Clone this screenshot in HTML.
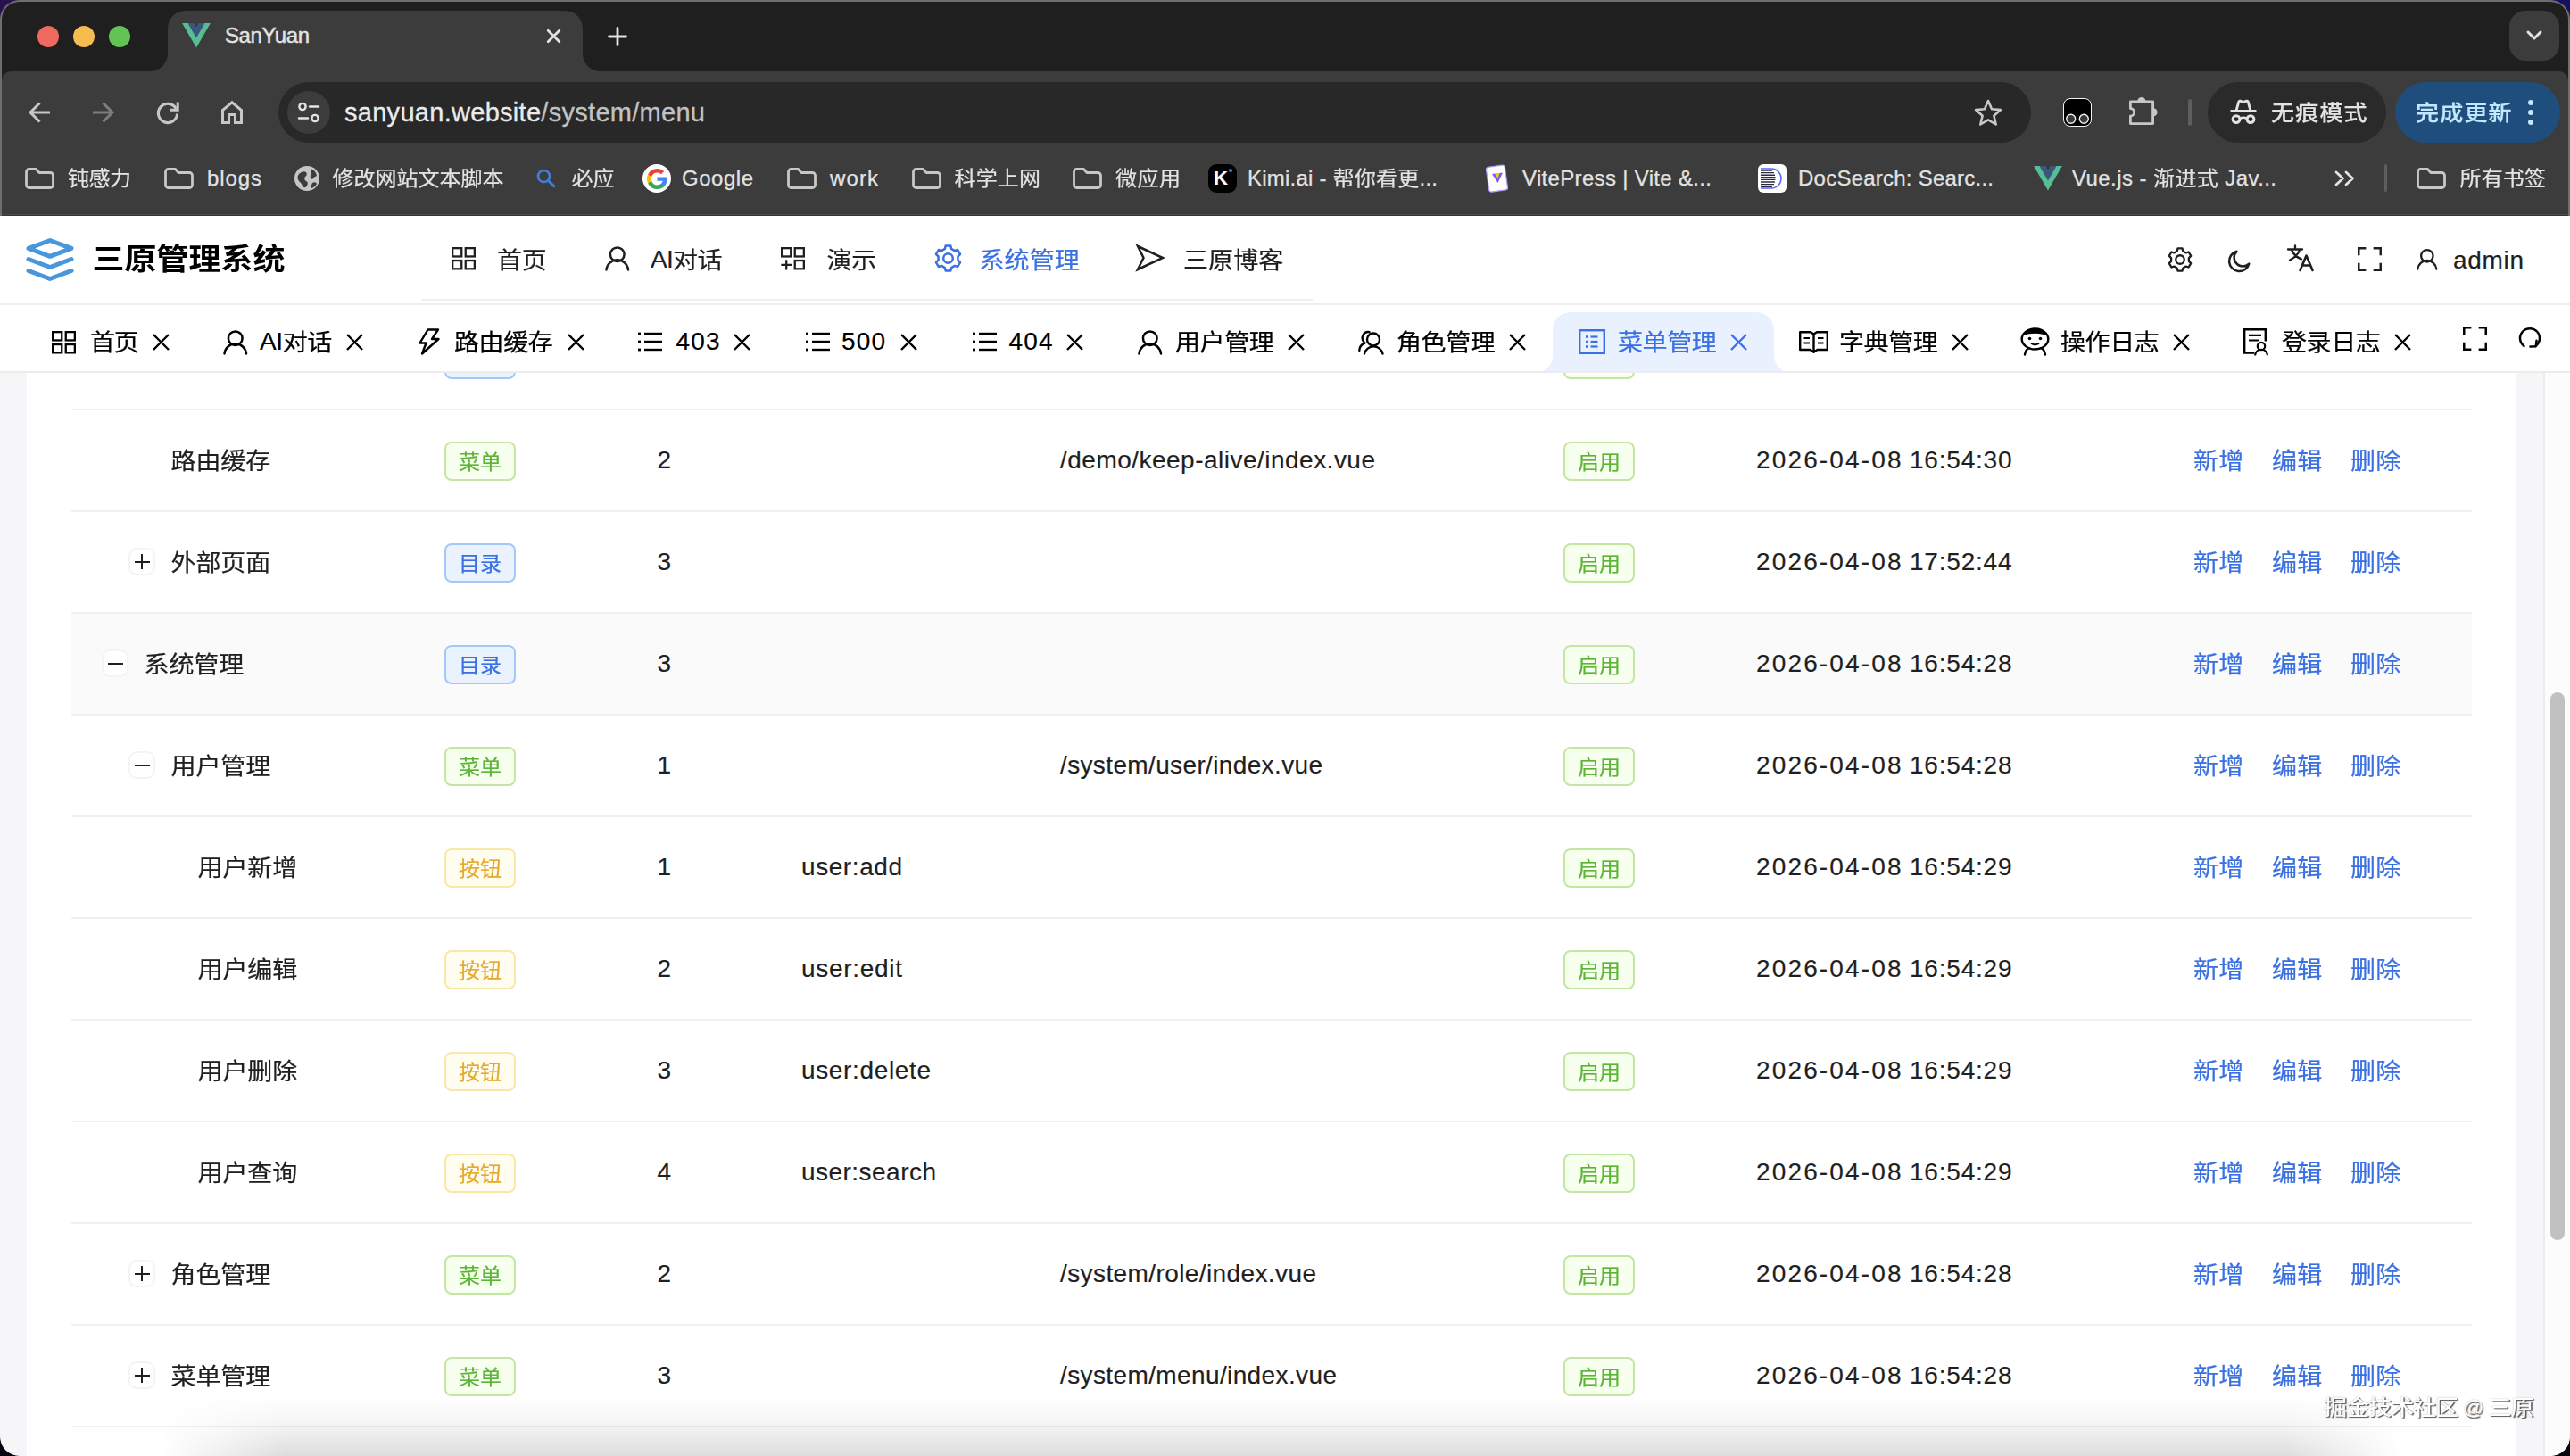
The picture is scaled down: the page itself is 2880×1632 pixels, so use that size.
<!DOCTYPE html>
<html lang="zh-CN"><head><meta charset="utf-8"><title>SanYuan</title>
<style>
html,body{margin:0;padding:0}
body{width:2880px;height:1632px;position:relative;overflow:hidden;background:#000;font-family:"Liberation Sans","Noto Sans CJK SC",sans-serif;-webkit-text-stroke:.18px}
div,svg{box-sizing:border-box}
svg{overflow:visible}
i{font-style:normal;display:inline-block;position:relative;top:.042em;transform:scaleY(.93);transform-origin:50% 55%;-webkit-text-stroke:.25px}
.nb i{-webkit-text-stroke:0}
.bk i{top:-.02em}
</style></head><body>
<div style="position:absolute;left:0px;top:0px;width:40px;height:40px;background:#2a1050;"></div>
<div style="position:absolute;left:2840px;top:0px;width:40px;height:40px;background:#161060;"></div>
<div style="position:absolute;left:0;top:0;width:2880px;height:1632px;border-radius:22px;background:#6e6e6e;overflow:hidden">
<div style="position:absolute;left:2px;top:2px;right:2px;bottom:0;border-radius:20px 20px 20px 20px;background:#1f1f1f;overflow:hidden" id="win">
</div></div>
<div style="position:absolute;left:0;top:0;width:2880px;height:1632px;border-radius:22px;overflow:hidden">
<svg style="position:absolute;left:160px;top:12px" width="520" height="68" viewBox="0 0 520 68"><path d="M0 68 H8 A20 20 0 0 0 28 48 V20 A20 20 0 0 1 48 0 H473 A20 20 0 0 1 493 20 V48 A20 20 0 0 0 513 68 H520 Z" fill="#3c3c3c"/></svg>
<div style="position:absolute;left:41.75px;top:28.75px;width:24.5px;height:24.5px;background:#ee6a5f;border-radius:50%"></div>
<div style="position:absolute;left:81.75px;top:28.75px;width:24.5px;height:24.5px;background:#f5bd4f;border-radius:50%"></div>
<div style="position:absolute;left:121.75px;top:28.75px;width:24.5px;height:24.5px;background:#61c455;border-radius:50%"></div>
<svg style="position:absolute;left:204px;top:26px;" width="32" height="27.5" viewBox="0 0 100 86.6" fill="none"><path d="M0 0 H39.4 L50 18.3 L60.6 0 H100 L50 86.6 Z" fill="#55bf93"/><path d="M20 0 H39.4 L50 18.3 L60.6 0 H80 L50 52 Z" fill="#3b5580"/></svg>
<div style="position:absolute;left:252px;top:16px;height:48px;line-height:48px;font-size:24px;color:#e3e3e3;white-space:nowrap;letter-spacing:-0.406px;-webkit-text-stroke:0.45px #e3e3e3;">SanYuan</div>
<svg style="position:absolute;left:612.5px;top:33px;" width="15" height="15" viewBox="0 0 15 15" fill="none"><path d="M1.2 1.2 L13.8 13.8 M13.8 1.2 L1.2 13.8" stroke="#e3e3e3" stroke-width="2.8" stroke-linecap="round"/></svg>
<svg style="position:absolute;left:682px;top:31px;" width="20" height="20" viewBox="0 0 20 20" fill="none"><path d="M10 0.5 V19.5 M0.5 10 H19.5" stroke="#e3e3e3" stroke-width="2.8" stroke-linecap="round"/></svg>
<div style="position:absolute;left:2812px;top:12px;width:56px;height:56px;background:#3c3c3c;border-radius:18px"></div>
<svg style="position:absolute;left:2831px;top:34px;" width="18" height="12" viewBox="0 0 18 12" fill="none"><path d="M2 2 L9 9 L16 2" stroke="#e3e3e3" stroke-width="3" stroke-linecap="round" stroke-linejoin="round"/></svg>
<div style="position:absolute;left:2px;top:80px;width:2876px;height:162px;background:#3c3c3c;border-radius:10px 10px 0 0"></div>
<div style="position:absolute;left:2px;top:240px;width:2876px;height:1px;background:#4a4a4a;"></div>
<div style="position:absolute;left:2px;top:241px;width:2876px;height:1px;background:#363636;"></div>
<svg style="position:absolute;left:32px;top:114px;" width="24" height="24" viewBox="0 0 24 24" fill="none"><path d="M12.5 1.5 L2 12 L12.5 22.5 M2.5 12 H24" stroke="#c7c7c7" stroke-width="3" stroke-linecap="butt" stroke-linejoin="miter"/></svg>
<svg style="position:absolute;left:104px;top:114px;" width="24" height="24" viewBox="0 0 24 24" fill="none"><path d="M11.5 1.5 L22 12 L11.5 22.5 M21.5 12 H0" stroke="#7c7c7c" stroke-width="3" stroke-linecap="butt" stroke-linejoin="miter"/></svg>
<svg style="position:absolute;left:175px;top:113px;" width="26" height="26" viewBox="0 0 26 26" fill="none"><path d="M22.3 8.8 A10.6 10.6 0 1 0 23.6 14.5" stroke="#c7c7c7" stroke-width="3.1" stroke-linecap="butt"/><path d="M24.2 1.5 V10.2 H15.5" stroke="#c7c7c7" stroke-width="3" stroke-linecap="butt" stroke-linejoin="miter"/></svg>
<svg style="position:absolute;left:248px;top:113px;" width="24" height="26" viewBox="0 0 24 26" fill="none"><path d="M1.5 10.5 L12 1.8 L22.5 10.5 V24.5 H15.5 V15.5 H8.5 V24.5 H1.5 Z" stroke="#c7c7c7" stroke-width="3" stroke-linejoin="miter"/></svg>
<div style="position:absolute;left:312px;top:92px;width:1964px;height:68px;background:#282828;border-radius:34px"></div>
<div style="position:absolute;left:322px;top:102px;width:48px;height:48px;background:#3c3c3c;border-radius:50%"></div>
<svg style="position:absolute;left:334px;top:114px;" width="24" height="24" viewBox="0 0 24 24" fill="none"><circle cx="5" cy="5.5" r="3.6" stroke="#e3e3e3" stroke-width="2.4"/><path d="M13 5.5 H23" stroke="#e3e3e3" stroke-width="2.4" stroke-linecap="round"/><circle cx="19" cy="18.5" r="3.6" stroke="#e3e3e3" stroke-width="2.4"/><path d="M1 18.5 H11" stroke="#e3e3e3" stroke-width="2.4" stroke-linecap="round"/></svg>
<div style="position:absolute;left:386px;top:97px;height:58px;line-height:58px;font-size:29px;color:#ebebeb;white-space:nowrap;letter-spacing:0.287px;-webkit-text-stroke:0.3px #ebebeb;">sanyuan.website<span style="color:#c2c2c2;-webkit-text-stroke-color:#c2c2c2">/system/menu</span></div>
<svg style="position:absolute;left:2212px;top:110px;" width="32" height="32" viewBox="0 0 32 32" fill="none"><path d="M16 3 L20 12.2 L30 13.1 L22.4 19.7 L24.7 29.5 L16 24.3 L7.3 29.5 L9.6 19.7 L2 13.1 L12 12.2 Z" stroke="#c7c7c7" stroke-width="2.6" stroke-linejoin="round"/></svg>
<div style="position:absolute;left:2312px;top:110px;width:32px;height:32px;background:#000;border-radius:8px;border:1.5px solid #f2f2f2"></div>
<svg style="position:absolute;left:2312px;top:110px;" width="32" height="32" viewBox="0 0 32 32" fill="none"><circle cx="8.7" cy="23.3" r="5" fill="#3a3a3a" stroke="#f2f2f2" stroke-width="1.4"/><circle cx="23.3" cy="23.3" r="5" fill="#3a3a3a" stroke="#f2f2f2" stroke-width="1.4"/></svg>
<svg style="position:absolute;left:2385px;top:107px;" width="36" height="36" viewBox="0 0 36 36" fill="none"><path d="M2.4 6.9 H27.6 V31.6 H2.4 V23.1 A4.3 4.3 0 0 0 2.4 14.5 Z" stroke="#c7c7c7" stroke-width="2.8" stroke-linejoin="round"/><path d="M10.3 6.5 A4.6 4.6 0 0 1 19.5 6.5 Z M28 14.2 A4.6 4.6 0 0 1 28 23.4 Z" fill="#c7c7c7"/></svg>
<div style="position:absolute;left:2452px;top:111px;width:4px;height:30px;background:#5e5e5e;border-radius:2px"></div>
<div style="position:absolute;left:2474px;top:92px;width:200px;height:68px;background:#2a2a2a;border-radius:34px"></div>
<svg style="position:absolute;left:2499px;top:111px;" width="30" height="28" viewBox="0 0 30 28" fill="none"><path d="M0.5 13.5 H29.5" stroke="#e3e3e3" stroke-width="3" stroke-linecap="butt"/><path d="M7 13 L9.8 3 Q10.2 1.8 11.5 2.2 L14 3 Q15 3.3 16 3 L18.5 2.2 Q19.8 1.8 20.2 3 L23 13" stroke="#e3e3e3" stroke-width="2.8" stroke-linejoin="round"/><circle cx="7" cy="22.6" r="3.9" stroke="#e3e3e3" stroke-width="3"/><circle cx="23" cy="22.6" r="3.9" stroke="#e3e3e3" stroke-width="3"/><path d="M11.3 21.8 Q15 19.6 18.7 21.8" stroke="#e3e3e3" stroke-width="2.6"/></svg>
<div style="position:absolute;left:2545px;top:99px;height:52px;line-height:52px;font-size:26px;color:#e3e3e3;white-space:nowrap;letter-spacing:1.195px;font-weight:500;"><i>无痕模式</i></div>
<div style="position:absolute;left:2684px;top:92px;width:185px;height:68px;background:#1f4e7c;border-radius:34px"></div>
<div style="position:absolute;left:2707px;top:99px;height:52px;line-height:52px;font-size:26px;color:#c2e7ff;white-space:nowrap;letter-spacing:1.195px;font-weight:500;"><i>完成更新</i></div>
<div style="position:absolute;left:2832.8px;top:111.8px;width:6.4px;height:6.4px;background:#c2e7ff;border-radius:50%"></div>
<div style="position:absolute;left:2832.8px;top:122.8px;width:6.4px;height:6.4px;background:#c2e7ff;border-radius:50%"></div>
<div style="position:absolute;left:2832.8px;top:133.8px;width:6.4px;height:6.4px;background:#c2e7ff;border-radius:50%"></div>
<svg style="position:absolute;left:27.5px;top:188px;" width="33" height="24" viewBox="0 0 33 24" fill="none"><path d="M1.5 4.5 A3 3 0 0 1 4.5 1.5 H12.5 L16 5.5 H28.5 A3 3 0 0 1 31.5 8.5 V19.5 A3 3 0 0 1 28.5 22.5 H4.5 A3 3 0 0 1 1.5 19.5 Z" stroke="#c7c7c7" stroke-width="2.8" stroke-linejoin="round"/></svg>
<div class="bk" style="position:absolute;left:76px;top:176px;height:48px;line-height:48px;font-size:24px;color:#e3e3e3;white-space:nowrap;letter-spacing:-0.550px;-webkit-text-stroke:0.25px #e3e3e3;"><i>钝感力</i></div>
<svg style="position:absolute;left:183.5px;top:188px;" width="33" height="24" viewBox="0 0 33 24" fill="none"><path d="M1.5 4.5 A3 3 0 0 1 4.5 1.5 H12.5 L16 5.5 H28.5 A3 3 0 0 1 31.5 8.5 V19.5 A3 3 0 0 1 28.5 22.5 H4.5 A3 3 0 0 1 1.5 19.5 Z" stroke="#c7c7c7" stroke-width="2.8" stroke-linejoin="round"/></svg>
<div class="bk" style="position:absolute;left:232px;top:176px;height:48px;line-height:48px;font-size:24px;color:#e3e3e3;white-space:nowrap;letter-spacing:0.906px;-webkit-text-stroke:0.25px #e3e3e3;">blogs</div>
<svg style="position:absolute;left:330px;top:186px;" width="28" height="28" viewBox="0 0 28 28" fill="none"><circle cx="14" cy="14" r="14" fill="#c4c7c5"/><path d="M5 9 Q9 5 13 7 Q15 10 12 12 Q10 15 13 17 Q16 18 14 22 Q12 26 9 23 Q8 19 5 17 Q2 13 5 9 Z M18 3 Q24 5 25 11 Q22 12 20 15 Q17 14 18 10 Q20 8 18 3 Z M20 19 Q24 17 25 20 Q23 24 19 25 Q18 22 20 19Z" fill="#3c3c3c"/></svg>
<div class="bk" style="position:absolute;left:372.5px;top:176px;height:48px;line-height:48px;font-size:24px;color:#e3e3e3;white-space:nowrap;letter-spacing:-0.014px;-webkit-text-stroke:0.25px #e3e3e3;"><i>修改网站文本脚本</i></div>
<svg style="position:absolute;left:601px;top:189px;" width="22" height="22" viewBox="0 0 22 22" fill="none"><circle cx="8.5" cy="8.5" r="6.5" stroke="#3f7fd9" stroke-width="2.7"/><path d="M13.5 13.5 L19.8 19.8" stroke="#3f7fd9" stroke-width="3" stroke-linecap="round"/></svg>
<div class="bk" style="position:absolute;left:640.5px;top:176px;height:48px;line-height:48px;font-size:24px;color:#e3e3e3;white-space:nowrap;letter-spacing:-0.100px;-webkit-text-stroke:0.25px #e3e3e3;"><i>必应</i></div>
<div style="position:absolute;left:720px;top:184px;width:32px;height:32px;background:#fff;border-radius:50%"></div>
<svg style="position:absolute;left:724.5px;top:188.5px;" width="23" height="23" viewBox="0 0 20 20" fill="none"><path d="M19.6 10.23c0-.68-.06-1.36-.18-2.02H10v3.83h5.4a4.6 4.6 0 0 1-2 3.02v2.5h3.23c1.9-1.75 2.97-4.32 2.97-7.33z" fill="#4285f4"/><path d="M10 20c2.7 0 4.97-.9 6.63-2.43l-3.24-2.5c-.9.6-2.04.96-3.39.96-2.6 0-4.8-1.76-5.6-4.12H1.07v2.58A10 10 0 0 0 10 20z" fill="#34a853"/><path d="M4.4 11.9a6 6 0 0 1 0-3.8V5.5H1.07a10 10 0 0 0 0 9l3.33-2.6z" fill="#fbbc05"/><path d="M10 3.96c1.47 0 2.8.5 3.83 1.5l2.87-2.87A9.97 9.97 0 0 0 10 0 10 10 0 0 0 1.07 5.5L4.4 8.1C5.2 5.72 7.4 3.96 10 3.96z" fill="#ea4335"/></svg>
<div class="bk" style="position:absolute;left:764px;top:176px;height:48px;line-height:48px;font-size:24px;color:#e3e3e3;white-space:nowrap;letter-spacing:0.522px;-webkit-text-stroke:0.25px #e3e3e3;">Google</div>
<svg style="position:absolute;left:881.5px;top:188px;" width="33" height="24" viewBox="0 0 33 24" fill="none"><path d="M1.5 4.5 A3 3 0 0 1 4.5 1.5 H12.5 L16 5.5 H28.5 A3 3 0 0 1 31.5 8.5 V19.5 A3 3 0 0 1 28.5 22.5 H4.5 A3 3 0 0 1 1.5 19.5 Z" stroke="#c7c7c7" stroke-width="2.8" stroke-linejoin="round"/></svg>
<div class="bk" style="position:absolute;left:930px;top:176px;height:48px;line-height:48px;font-size:24px;color:#e3e3e3;white-space:nowrap;letter-spacing:1.109px;-webkit-text-stroke:0.25px #e3e3e3;">work</div>
<svg style="position:absolute;left:1021.5px;top:188px;" width="33" height="24" viewBox="0 0 33 24" fill="none"><path d="M1.5 4.5 A3 3 0 0 1 4.5 1.5 H12.5 L16 5.5 H28.5 A3 3 0 0 1 31.5 8.5 V19.5 A3 3 0 0 1 28.5 22.5 H4.5 A3 3 0 0 1 1.5 19.5 Z" stroke="#c7c7c7" stroke-width="2.8" stroke-linejoin="round"/></svg>
<div class="bk" style="position:absolute;left:1069.5px;top:176px;height:48px;line-height:48px;font-size:24px;color:#e3e3e3;white-space:nowrap;letter-spacing:0.133px;-webkit-text-stroke:0.25px #e3e3e3;"><i>科学上网</i></div>
<svg style="position:absolute;left:1201.5px;top:188px;" width="33" height="24" viewBox="0 0 33 24" fill="none"><path d="M1.5 4.5 A3 3 0 0 1 4.5 1.5 H12.5 L16 5.5 H28.5 A3 3 0 0 1 31.5 8.5 V19.5 A3 3 0 0 1 28.5 22.5 H4.5 A3 3 0 0 1 1.5 19.5 Z" stroke="#c7c7c7" stroke-width="2.8" stroke-linejoin="round"/></svg>
<div class="bk" style="position:absolute;left:1250px;top:176px;height:48px;line-height:48px;font-size:24px;color:#e3e3e3;white-space:nowrap;letter-spacing:0.450px;-webkit-text-stroke:0.25px #e3e3e3;"><i>微应用</i></div>
<div style="position:absolute;left:1354px;top:184px;width:32px;height:32px;background:#000;border-radius:9px"></div>
<div style="position:absolute;left:1360px;top:178px;height:44px;line-height:44px;font-size:22px;color:#fff;white-space:nowrap;font-weight:700">K</div>
<div style="position:absolute;left:1377px;top:189px;width:4px;height:4px;background:#3b82f6;border-radius:50%"></div>
<div class="bk" style="position:absolute;left:1398px;top:176px;height:48px;line-height:48px;font-size:24px;color:#e3e3e3;white-space:nowrap;letter-spacing:0.228px;-webkit-text-stroke:0.25px #e3e3e3;">Kimi.ai - <i>帮你看更</i>...</div>
<svg style="position:absolute;left:1664px;top:184px;" width="28" height="32" viewBox="0 0 28 32" fill="none"><rect x="3" y="2" width="21" height="28" rx="2.5" transform="rotate(-8 14 16)" fill="#fff" stroke="#b39aff" stroke-width="1.2"/><path d="M8 11 L20 9.5 L14.5 21 Z" fill="#7b5cf5"/><path d="M11 10.5 L16.5 9.8 L14.5 16 Z" fill="#ffc517"/></svg>
<div class="bk" style="position:absolute;left:1706px;top:176px;height:48px;line-height:48px;font-size:24px;color:#e3e3e3;white-space:nowrap;letter-spacing:0.327px;-webkit-text-stroke:0.25px #e3e3e3;">VitePress | Vite &amp;...</div>
<div style="position:absolute;left:1970px;top:184px;width:32px;height:32px;background:#fff;border-radius:6px"></div>
<svg style="position:absolute;left:1970px;top:184px;" width="32" height="32" viewBox="0 0 32 32" fill="none"><path d="M3 5 H15 A11 11 0 0 1 15 27 H3" stroke="#5468ff" stroke-width="1.5" fill="none"/><path d="M3 7 H16 M3 9.6 H18 M3 12.2 H19 M3 14.8 H19.5 M3 17.4 H19.5 M3 20 H19 M3 22.6 H18 M3 25.2 H16" stroke="#2b2b40" stroke-width="1.4"/></svg>
<div class="bk" style="position:absolute;left:2015px;top:176px;height:48px;line-height:48px;font-size:24px;color:#e3e3e3;white-space:nowrap;letter-spacing:0.235px;-webkit-text-stroke:0.25px #e3e3e3;">DocSearch: Searc...</div>
<svg style="position:absolute;left:2279px;top:186px;" width="32" height="27.5" viewBox="0 0 100 86.6" fill="none"><path d="M0 0 H39.4 L50 18.3 L60.6 0 H100 L50 86.6 Z" fill="#55bf93"/><path d="M20 0 H39.4 L50 18.3 L60.6 0 H80 L50 52 Z" fill="#3b5580"/></svg>
<div class="bk" style="position:absolute;left:2322px;top:176px;height:48px;line-height:48px;font-size:24px;color:#e3e3e3;white-space:nowrap;letter-spacing:0.423px;-webkit-text-stroke:0.25px #e3e3e3;">Vue.js - <i>渐进式</i> Jav...</div>
<svg style="position:absolute;left:2616px;top:191px;" width="23" height="18" viewBox="0 0 23 18" fill="none"><path d="M2 2 L9.5 9 L2 16 M13 2 L20.5 9 L13 16" stroke="#e3e3e3" stroke-width="2.8" stroke-linecap="round" stroke-linejoin="round"/></svg>
<div style="position:absolute;left:2672px;top:184px;width:3px;height:31px;background:#5e5e5e;border-radius:2px"></div>
<svg style="position:absolute;left:2707.5px;top:188px;" width="33" height="24" viewBox="0 0 33 24" fill="none"><path d="M1.5 4.5 A3 3 0 0 1 4.5 1.5 H12.5 L16 5.5 H28.5 A3 3 0 0 1 31.5 8.5 V19.5 A3 3 0 0 1 28.5 22.5 H4.5 A3 3 0 0 1 1.5 19.5 Z" stroke="#c7c7c7" stroke-width="2.8" stroke-linejoin="round"/></svg>
<div class="bk" style="position:absolute;left:2756.5px;top:176px;height:48px;line-height:48px;font-size:24px;color:#e3e3e3;white-space:nowrap;letter-spacing:0.133px;-webkit-text-stroke:0.25px #e3e3e3;"><i>所有书签</i></div>
<div style="position:absolute;left:0px;top:242px;width:2880px;height:1390px;background:#f6f6f9;"></div>
<div style="position:absolute;left:30px;top:418px;width:2790px;height:1214px;background:#fff;"></div>
<div style="position:absolute;left:498px;top:381.0px;width:80px;height:44px;border:2px solid #a3c8f6;background:#eaf2fe;border-radius:8px;color:#3a70e2;font-size:24px;line-height:39px;text-align:center;white-space:nowrap"><i>目录</i></div>
<div style="position:absolute;left:1752px;top:381.0px;width:80px;height:44px;border:2px solid #c3e6a2;background:#f7ffee;border-radius:8px;color:#5cb536;font-size:24px;line-height:39px;text-align:center;white-space:nowrap"><i>启用</i></div>
<div style="position:absolute;left:0px;top:242px;width:2880px;height:98px;background:#fff;"></div>
<div style="position:absolute;left:0px;top:340px;width:2880px;height:2px;background:#efefef;"></div>
<div style="position:absolute;left:472px;top:335px;width:999px;height:2px;background:#f0f0f0;"></div>
<div style="position:absolute;left:0px;top:342px;width:2880px;height:74px;background:#fff;"></div>
<svg style="position:absolute;left:26px;top:262px;" width="60" height="58" viewBox="0 0 60 58" fill="none"><path d="M30 7.5 L54 16.4 L30 25.3 L6 16.4 Z M6 28.5 L30 37.5 L54 28.5 M6 41.5 L30 50.5 L54 41.5" stroke="#4896dc" stroke-width="5" stroke-linejoin="round" stroke-linecap="round"/></svg>
<div class="nb" style="position:absolute;left:103.5px;top:253px;height:72px;line-height:72px;font-size:36px;color:#000;white-space:nowrap;letter-spacing:0.017px;font-weight:700;"><i>三原管理系统</i></div>
<svg style="position:absolute;left:506px;top:276.5px;" width="27" height="25.5" viewBox="0 0 27 25.5" fill="none"><rect x="1.15" y="1.15" width="10.100000000000001" height="9.3" stroke="#1f1f1f" stroke-width="2.3"/><rect x="15.75" y="1.15" width="10.100000000000001" height="9.3" stroke="#1f1f1f" stroke-width="2.3"/><rect x="15.75" y="15.05" width="10.100000000000001" height="9.3" stroke="#1f1f1f" stroke-width="2.3"/><rect x="1.15" y="15.05" width="10.100000000000001" height="9.3" stroke="#1f1f1f" stroke-width="2.3"/></svg>
<div style="position:absolute;left:557px;top:262.5px;height:56px;line-height:56px;font-size:28px;color:#1f1f1f;white-space:nowrap;letter-spacing:-0.216px;"><i>首页</i></div>
<svg style="position:absolute;left:678px;top:275px;" width="27.5" height="28.0" viewBox="0 0 27.5 28" fill="none"><circle cx="13.75" cy="10.2" r="7.8" stroke="#1f1f1f" stroke-width="2.5"/><path d="M1.5 27.5 A12.3 12.3 0 0 1 26 27.5" stroke="#1f1f1f" stroke-width="2.5" stroke-linecap="round"/></svg>
<div style="position:absolute;left:729px;top:262.5px;height:56px;line-height:56px;font-size:28px;color:#1f1f1f;white-space:nowrap;letter-spacing:-0.695px;">AI<i>对话</i></div>
<svg style="position:absolute;left:875.3px;top:276.5px;" width="27" height="25.5" viewBox="0 0 27 25.5" fill="none"><rect x="1.15" y="1.15" width="10.100000000000001" height="9.3" stroke="#1f1f1f" stroke-width="2.3"/><rect x="15.75" y="1.15" width="10.100000000000001" height="9.3" stroke="#1f1f1f" stroke-width="2.3"/><rect x="15.75" y="15.05" width="10.100000000000001" height="9.3" stroke="#1f1f1f" stroke-width="2.3"/><path d="M6.2 14.2 V25.5 M0.3 19.8 H12.2" stroke="#1f1f1f" stroke-width="2.3"/></svg>
<div style="position:absolute;left:926.5px;top:262.5px;height:56px;line-height:56px;font-size:28px;color:#1f1f1f;white-space:nowrap;letter-spacing:-0.216px;"><i>演示</i></div>
<svg style="position:absolute;left:1046.5px;top:273.5px;" width="31" height="31" viewBox="0 0 31 31" fill="none"><path d="M19.12 26.06 L18.33 29.47 L12.67 29.47 L11.88 26.06 L8.16 23.91 L4.82 24.93 L1.99 20.03 L4.55 17.65 L4.55 13.35 L1.99 10.97 L4.82 6.07 L8.16 7.09 L11.88 4.94 L12.67 1.53 L18.33 1.53 L19.12 4.94 L22.84 7.09 L26.18 6.07 L29.01 10.97 L26.45 13.35 L26.45 17.65 L29.01 20.03 L26.18 24.93 L22.84 23.91 Z" stroke="#3a70e2" stroke-width="2.5" stroke-linejoin="round"/><circle cx="15.5" cy="15.5" r="5.27" stroke="#3a70e2" stroke-width="2.5"/></svg>
<div style="position:absolute;left:1097.5px;top:262.5px;height:56px;line-height:56px;font-size:28px;color:#3a70e2;white-space:nowrap;letter-spacing:0.095px;"><i>系统管理</i></div>
<svg style="position:absolute;left:1273px;top:274px;" width="32" height="30" viewBox="0 0 32 30" fill="none"><path d="M2 2 L30 15 L2 28 L8.5 15 Z" stroke="#1f1f1f" stroke-width="2.5" stroke-linejoin="miter"/></svg>
<div style="position:absolute;left:1326px;top:262.5px;height:56px;line-height:56px;font-size:28px;color:#1f1f1f;white-space:nowrap;letter-spacing:0.095px;"><i>三原博客</i></div>
<svg style="position:absolute;left:2429px;top:276.5px;" width="28" height="28" viewBox="0 0 28 28" fill="none"><path d="M17.27 23.54 L16.55 26.59 L11.45 26.59 L10.73 23.54 L7.37 21.60 L4.37 22.51 L1.82 18.09 L4.11 15.94 L4.11 12.06 L1.82 9.91 L4.37 5.49 L7.37 6.40 L10.73 4.46 L11.45 1.41 L16.55 1.41 L17.27 4.46 L20.63 6.40 L23.63 5.49 L26.18 9.91 L23.89 12.06 L23.89 15.94 L26.18 18.09 L23.63 22.51 L20.63 21.60 Z" stroke="#1f1f1f" stroke-width="2.3" stroke-linejoin="round"/><circle cx="14.0" cy="14.0" r="4.76" stroke="#1f1f1f" stroke-width="2.3"/></svg>
<svg style="position:absolute;left:2497px;top:279.5px;" width="25" height="25" viewBox="0 0 25 25" fill="none"><path d="M9.5 1.8 A11.3 11.3 0 1 0 23.3 15.6 A9.2 9.2 0 0 1 9.5 1.8 Z" stroke="#1f1f1f" stroke-width="2.5" stroke-linejoin="round"/></svg>
<svg style="position:absolute;left:2563px;top:274px;" width="30" height="30" viewBox="0 0 30 30" fill="none"><path d="M1 5.5 H17 M9 1.5 V5.5 M14.3 5.5 Q12 13 3 17.5 M4.8 5.5 Q7.5 13 16 16.5" stroke="#1f1f1f" stroke-width="2.3" stroke-linecap="round"/><path d="M14.5 29 L21.5 12.5 L28.5 29 M17 23.5 H26" stroke="#1f1f1f" stroke-width="2.6" stroke-linejoin="round" stroke-linecap="round"/></svg>
<svg style="position:absolute;left:2641.5px;top:277.3px;" width="27" height="27" viewBox="0 0 27 27" fill="none"><path d="M1.25 9.35 V1.25 H9.35 M17.65 1.25 H25.75 V9.35 M25.75 17.65 V25.75 H17.65 M9.35 25.75 H1.25 V17.65" stroke="#1f1f1f" stroke-width="2.5" /></svg>
<svg style="position:absolute;left:2707.5px;top:278.3px;" width="23.65" height="24.08" viewBox="0 0 27.5 28" fill="none"><circle cx="13.75" cy="10.2" r="7.8" stroke="#1f1f1f" stroke-width="2.7"/><path d="M1.5 27.5 A12.3 12.3 0 0 1 26 27.5" stroke="#1f1f1f" stroke-width="2.7" stroke-linecap="round"/></svg>
<div style="position:absolute;left:2749px;top:263.5px;height:56px;line-height:56px;font-size:28px;color:#1f1f1f;white-space:nowrap;letter-spacing:0.684px;">admin</div>
<svg style="position:absolute;left:1722px;top:350px" width="284" height="67" viewBox="0 0 284 67"><path d="M0 67 A18 18 0 0 0 18 49 V20 A20 20 0 0 1 38 0 H246 A20 20 0 0 1 266 20 V49 A18 18 0 0 0 284 67 Z" fill="#e8f1fd"/></svg>
<svg style="position:absolute;left:58px;top:370.5px;" width="27" height="25.5" viewBox="0 0 27 25.5" fill="none"><rect x="1.15" y="1.15" width="10.100000000000001" height="9.3" stroke="#000" stroke-width="2.3"/><rect x="15.75" y="1.15" width="10.100000000000001" height="9.3" stroke="#000" stroke-width="2.3"/><rect x="15.75" y="15.05" width="10.100000000000001" height="9.3" stroke="#000" stroke-width="2.3"/><rect x="1.15" y="15.05" width="10.100000000000001" height="9.3" stroke="#000" stroke-width="2.3"/></svg>
<div style="position:absolute;left:101px;top:354.5px;height:56px;line-height:56px;font-size:28px;color:#000;white-space:nowrap;letter-spacing:-1.216px;"><i>首页</i></div>
<svg style="position:absolute;left:171px;top:374px;" width="19" height="19" viewBox="0 0 19 19" fill="none"><path d="M1 1 L18 18 M18 1 L1 18" stroke="#000" stroke-width="2.4"/></svg>
<svg style="position:absolute;left:250px;top:368.5px;" width="27.5" height="28.0" viewBox="0 0 27.5 28" fill="none"><circle cx="13.75" cy="10.2" r="7.8" stroke="#000" stroke-width="2.5"/><path d="M1.5 27.5 A12.3 12.3 0 0 1 26 27.5" stroke="#000" stroke-width="2.5" stroke-linecap="round"/></svg>
<div style="position:absolute;left:291px;top:354.5px;height:56px;line-height:56px;font-size:28px;color:#000;white-space:nowrap;letter-spacing:-0.361px;">AI<i>对话</i></div>
<svg style="position:absolute;left:388px;top:374px;" width="19" height="19" viewBox="0 0 19 19" fill="none"><path d="M1 1 L18 18 M18 1 L1 18" stroke="#000" stroke-width="2.4"/></svg>
<svg style="position:absolute;left:469px;top:368px;" width="24" height="30" viewBox="0 0 24 30" fill="none"><path d="M10.5 1.5 H22 L15 12 H22.5 L4 28.5 L8.5 16.5 H1.5 Z" stroke="#000" stroke-width="2.4" stroke-linejoin="round"/></svg>
<div style="position:absolute;left:509px;top:354.5px;height:56px;line-height:56px;font-size:28px;color:#000;white-space:nowrap;letter-spacing:-0.405px;"><i>路由缓存</i></div>
<svg style="position:absolute;left:636px;top:374px;" width="19" height="19" viewBox="0 0 19 19" fill="none"><path d="M1 1 L18 18 M18 1 L1 18" stroke="#000" stroke-width="2.4"/></svg>
<svg style="position:absolute;left:714.5px;top:371.0px;" width="27" height="24" viewBox="0 0 27 24" fill="none"><rect x="0" y="1.6" width="3" height="2.8" fill="#000"/><path d="M7 3 H27" stroke="#000" stroke-width="2.4"/><rect x="0" y="10.6" width="3" height="2.8" fill="#000"/><path d="M7 12 H27" stroke="#000" stroke-width="2.4"/><rect x="0" y="19.6" width="3" height="2.8" fill="#000"/><path d="M7 21 H27" stroke="#000" stroke-width="2.4"/></svg>
<div style="position:absolute;left:757.5px;top:354.5px;height:56px;line-height:56px;font-size:28px;color:#000;white-space:nowrap;letter-spacing:1.141px;">403</div>
<svg style="position:absolute;left:822px;top:374px;" width="19" height="19" viewBox="0 0 19 19" fill="none"><path d="M1 1 L18 18 M18 1 L1 18" stroke="#000" stroke-width="2.4"/></svg>
<svg style="position:absolute;left:902.5px;top:371.0px;" width="27" height="24" viewBox="0 0 27 24" fill="none"><rect x="0" y="1.6" width="3" height="2.8" fill="#000"/><path d="M7 3 H27" stroke="#000" stroke-width="2.4"/><rect x="0" y="10.6" width="3" height="2.8" fill="#000"/><path d="M7 12 H27" stroke="#000" stroke-width="2.4"/><rect x="0" y="19.6" width="3" height="2.8" fill="#000"/><path d="M7 21 H27" stroke="#000" stroke-width="2.4"/></svg>
<div style="position:absolute;left:943px;top:354.5px;height:56px;line-height:56px;font-size:28px;color:#000;white-space:nowrap;letter-spacing:1.141px;">500</div>
<svg style="position:absolute;left:1008.5px;top:374px;" width="19" height="19" viewBox="0 0 19 19" fill="none"><path d="M1 1 L18 18 M18 1 L1 18" stroke="#000" stroke-width="2.4"/></svg>
<svg style="position:absolute;left:1089.5px;top:371.0px;" width="27" height="24" viewBox="0 0 27 24" fill="none"><rect x="0" y="1.6" width="3" height="2.8" fill="#000"/><path d="M7 3 H27" stroke="#000" stroke-width="2.4"/><rect x="0" y="10.6" width="3" height="2.8" fill="#000"/><path d="M7 12 H27" stroke="#000" stroke-width="2.4"/><rect x="0" y="19.6" width="3" height="2.8" fill="#000"/><path d="M7 21 H27" stroke="#000" stroke-width="2.4"/></svg>
<div style="position:absolute;left:1130.5px;top:354.5px;height:56px;line-height:56px;font-size:28px;color:#000;white-space:nowrap;letter-spacing:1.141px;">404</div>
<svg style="position:absolute;left:1195px;top:374px;" width="19" height="19" viewBox="0 0 19 19" fill="none"><path d="M1 1 L18 18 M18 1 L1 18" stroke="#000" stroke-width="2.4"/></svg>
<svg style="position:absolute;left:1274.5px;top:368.5px;" width="27.5" height="28.0" viewBox="0 0 27.5 28" fill="none"><circle cx="13.75" cy="10.2" r="7.8" stroke="#000" stroke-width="2.5"/><path d="M1.5 27.5 A12.3 12.3 0 0 1 26 27.5" stroke="#000" stroke-width="2.5" stroke-linecap="round"/></svg>
<div style="position:absolute;left:1317px;top:354.5px;height:56px;line-height:56px;font-size:28px;color:#000;white-space:nowrap;letter-spacing:-0.405px;"><i>用户管理</i></div>
<svg style="position:absolute;left:1443px;top:374px;" width="19" height="19" viewBox="0 0 19 19" fill="none"><path d="M1 1 L18 18 M18 1 L1 18" stroke="#000" stroke-width="2.4"/></svg>
<svg style="position:absolute;left:1521.5px;top:368.5px;" width="29" height="28" viewBox="0 0 29 28" fill="none"><circle cx="17" cy="11.5" r="7" stroke="#000" stroke-width="2.4"/><path d="M7 27.5 A10.5 10.5 0 0 1 27.5 27.5" stroke="#000" stroke-width="2.4" stroke-linecap="round"/><path d="M12.5 3.2 A6.6 6.6 0 0 0 6.5 14.2 M7.5 15.5 A9.5 9.5 0 0 0 1.3 24" stroke="#000" stroke-width="2.4" stroke-linecap="round"/></svg>
<div style="position:absolute;left:1565px;top:354.5px;height:56px;line-height:56px;font-size:28px;color:#000;white-space:nowrap;letter-spacing:-0.405px;"><i>角色管理</i></div>
<svg style="position:absolute;left:1691px;top:374px;" width="19" height="19" viewBox="0 0 19 19" fill="none"><path d="M1 1 L18 18 M18 1 L1 18" stroke="#000" stroke-width="2.4"/></svg>
<svg style="position:absolute;left:1769px;top:369px;" width="30" height="28" viewBox="0 0 30 28" fill="none"><rect x="1.2" y="1.2" width="27.6" height="25.6" stroke="#3a70e2" stroke-width="2.4"/><rect x="8" y="7.2" width="2.8" height="2.6" fill="#3a70e2"/><path d="M13.5 8.5 H21.5" stroke="#3a70e2" stroke-width="2.2"/><rect x="8" y="12.7" width="2.8" height="2.6" fill="#3a70e2"/><path d="M13.5 14 H21.5" stroke="#3a70e2" stroke-width="2.2"/><rect x="8" y="18.2" width="2.8" height="2.6" fill="#3a70e2"/><path d="M13.5 19.5 H21.5" stroke="#3a70e2" stroke-width="2.2"/></svg>
<div style="position:absolute;left:1813px;top:354.5px;height:56px;line-height:56px;font-size:28px;color:#3a70e2;white-space:nowrap;letter-spacing:-0.405px;"><i>菜单管理</i></div>
<svg style="position:absolute;left:1938.5px;top:374px;" width="19" height="19" viewBox="0 0 19 19" fill="none"><path d="M1 1 L18 18 M18 1 L1 18" stroke="#3a70e2" stroke-width="2.4"/></svg>
<svg style="position:absolute;left:2015.5px;top:370.5px;" width="33" height="25" viewBox="0 0 33 25" fill="none"><path d="M1.2 1.2 H13 L16.5 3.6 L20 1.2 H31.8 V21 H20.5 L16.5 23.8 L12.5 21 H1.2 Z M16.5 3.6 V23.5" stroke="#000" stroke-width="2.4" stroke-linejoin="round"/><path d="M5.5 8 H12 M5.5 13.5 H12 M21 8 H27.5 M21 13.5 H27.5" stroke="#000" stroke-width="2.2"/></svg>
<div style="position:absolute;left:2061px;top:354.5px;height:56px;line-height:56px;font-size:28px;color:#000;white-space:nowrap;letter-spacing:-0.405px;"><i>字典管理</i></div>
<svg style="position:absolute;left:2187px;top:374px;" width="19" height="19" viewBox="0 0 19 19" fill="none"><path d="M1 1 L18 18 M18 1 L1 18" stroke="#000" stroke-width="2.4"/></svg>
<svg style="position:absolute;left:2263.5px;top:367px;" width="33" height="31" viewBox="0 0 33 31" fill="none"><ellipse cx="16.5" cy="13" rx="14.8" ry="11.5" stroke="#000" stroke-width="2.4"/><path d="M3.2 9 Q8 0.8 16.5 0.8 Q25 0.8 29.8 9 Q16.5 4.5 3.2 9 Z" fill="#000"/><circle cx="10.5" cy="12.5" r="1.8" fill="#000"/><circle cx="22.5" cy="12.5" r="1.8" fill="#000"/><path d="M12 17.8 Q16.5 21 21 17.8" stroke="#000" stroke-width="2"/><path d="M5 30.5 Q6 24.5 10 23.2 M28 30.5 Q27 24.5 23 23.2" stroke="#000" stroke-width="2.4" stroke-linecap="round"/></svg>
<div style="position:absolute;left:2309px;top:354.5px;height:56px;line-height:56px;font-size:28px;color:#000;white-space:nowrap;letter-spacing:-0.405px;"><i>操作日志</i></div>
<svg style="position:absolute;left:2435px;top:374px;" width="19" height="19" viewBox="0 0 19 19" fill="none"><path d="M1 1 L18 18 M18 1 L1 18" stroke="#000" stroke-width="2.4"/></svg>
<svg style="position:absolute;left:2513.5px;top:368px;" width="28" height="30" viewBox="0 0 28 30" fill="none"><path d="M12 27.5 H1.2 V1.2 H24.8 V14.5" stroke="#000" stroke-width="2.4"/><path d="M6 7.8 H20 M6 13.5 H17" stroke="#000" stroke-width="2.2"/><circle cx="20" cy="20" r="4.2" stroke="#000" stroke-width="2.2"/><path d="M13.2 29.5 A6.9 6.9 0 0 1 26.8 29.5" stroke="#000" stroke-width="2.2" stroke-linecap="round"/></svg>
<div style="position:absolute;left:2557px;top:354.5px;height:56px;line-height:56px;font-size:28px;color:#000;white-space:nowrap;letter-spacing:-0.405px;"><i>登录日志</i></div>
<svg style="position:absolute;left:2683px;top:374px;" width="19" height="19" viewBox="0 0 19 19" fill="none"><path d="M1 1 L18 18 M18 1 L1 18" stroke="#000" stroke-width="2.4"/></svg>
<svg style="position:absolute;left:2760px;top:366px;" width="27" height="27" viewBox="0 0 27 27" fill="none"><path d="M1.25 9.35 V1.25 H9.35 M17.65 1.25 H25.75 V9.35 M25.75 17.65 V25.75 H17.65 M9.35 25.75 H1.25 V17.65" stroke="#000" stroke-width="2.5" /></svg>
<svg style="position:absolute;left:2821px;top:367px;" width="26" height="25" viewBox="0 0 26 25" fill="none"><path d="M7.5 21 A11 11 0 1 1 20.5 21" stroke="#000" stroke-width="2.5" stroke-linecap="round"/><path d="M14.5 21.5 L20.8 21.2 L21.5 14.8" stroke="#000" stroke-width="2.5" stroke-linecap="round" stroke-linejoin="round"/></svg>
<div style="position:absolute;left:0px;top:416px;width:2880px;height:2px;background:#ececec;"></div>
<div style="position:absolute;left:80px;top:457.5px;width:2690px;height:2px;background:#f0f0f0;"></div>
<div style="position:absolute;left:191.5px;top:488.0px;height:56px;line-height:56px;font-size:28px;color:#1f1f1f;white-space:nowrap;letter-spacing:-0.072px;"><i>路由缓存</i></div>
<div style="position:absolute;left:498px;top:495.0px;width:80px;height:44px;border:2px solid #c3e6a2;background:#f7ffee;border-radius:8px;color:#5cb536;font-size:24px;line-height:39px;text-align:center;white-space:nowrap"><i>菜单</i></div>
<div style="position:absolute;left:736.4px;top:488.0px;height:56px;line-height:56px;font-size:28px;color:#1f1f1f;white-space:nowrap;">2</div>
<div style="position:absolute;left:1188px;top:488.0px;height:56px;line-height:56px;font-size:28px;color:#1f1f1f;white-space:nowrap;letter-spacing:0.485px;">/demo/keep-alive/index.vue</div>
<div style="position:absolute;left:1752px;top:495.0px;width:80px;height:44px;border:2px solid #c3e6a2;background:#f7ffee;border-radius:8px;color:#5cb536;font-size:24px;line-height:39px;text-align:center;white-space:nowrap"><i>启用</i></div>
<div style="position:absolute;left:1968px;top:488.0px;height:56px;line-height:56px;font-size:28px;color:#1f1f1f;white-space:nowrap;letter-spacing:2.141px;">2026-04-08</div>
<div style="position:absolute;left:2140px;top:488.0px;height:56px;line-height:56px;font-size:28px;color:#1f1f1f;white-space:nowrap;letter-spacing:0.786px;">16:54:30</div>
<div style="position:absolute;left:2458px;top:488.0px;height:56px;line-height:56px;font-size:28px;color:#3a70e2;white-space:nowrap;letter-spacing:0.284px;"><i>新增</i></div>
<div style="position:absolute;left:2546px;top:488.0px;height:56px;line-height:56px;font-size:28px;color:#3a70e2;white-space:nowrap;letter-spacing:0.284px;"><i>编辑</i></div>
<div style="position:absolute;left:2634px;top:488.0px;height:56px;line-height:56px;font-size:28px;color:#3a70e2;white-space:nowrap;letter-spacing:0.284px;"><i>删除</i></div>
<div style="position:absolute;left:80px;top:571.5px;width:2690px;height:2px;background:#f0f0f0;"></div>
<div style="position:absolute;left:144px;top:614.0px;width:30px;height:31px;border:2px solid #f4f4f4;background:#fff;border-radius:9px"></div>
<div style="position:absolute;left:150.5px;top:628.5px;width:17px;height:2px;background:#1f1f1f;"></div>
<div style="position:absolute;left:158px;top:621.0px;width:2px;height:17px;background:#1f1f1f;"></div>
<div style="position:absolute;left:191.5px;top:602.0px;height:56px;line-height:56px;font-size:28px;color:#1f1f1f;white-space:nowrap;letter-spacing:-0.072px;"><i>外部页面</i></div>
<div style="position:absolute;left:498px;top:609.0px;width:80px;height:44px;border:2px solid #a3c8f6;background:#eaf2fe;border-radius:8px;color:#3a70e2;font-size:24px;line-height:39px;text-align:center;white-space:nowrap"><i>目录</i></div>
<div style="position:absolute;left:736.4px;top:602.0px;height:56px;line-height:56px;font-size:28px;color:#1f1f1f;white-space:nowrap;">3</div>
<div style="position:absolute;left:1752px;top:609.0px;width:80px;height:44px;border:2px solid #c3e6a2;background:#f7ffee;border-radius:8px;color:#5cb536;font-size:24px;line-height:39px;text-align:center;white-space:nowrap"><i>启用</i></div>
<div style="position:absolute;left:1968px;top:602.0px;height:56px;line-height:56px;font-size:28px;color:#1f1f1f;white-space:nowrap;letter-spacing:2.141px;">2026-04-08</div>
<div style="position:absolute;left:2140px;top:602.0px;height:56px;line-height:56px;font-size:28px;color:#1f1f1f;white-space:nowrap;letter-spacing:0.786px;">17:52:44</div>
<div style="position:absolute;left:2458px;top:602.0px;height:56px;line-height:56px;font-size:28px;color:#3a70e2;white-space:nowrap;letter-spacing:0.284px;"><i>新增</i></div>
<div style="position:absolute;left:2546px;top:602.0px;height:56px;line-height:56px;font-size:28px;color:#3a70e2;white-space:nowrap;letter-spacing:0.284px;"><i>编辑</i></div>
<div style="position:absolute;left:2634px;top:602.0px;height:56px;line-height:56px;font-size:28px;color:#3a70e2;white-space:nowrap;letter-spacing:0.284px;"><i>删除</i></div>
<div style="position:absolute;left:80px;top:687.5px;width:2690px;height:112px;background:#fafafa;"></div>
<div style="position:absolute;left:80px;top:685.5px;width:2690px;height:2px;background:#f0f0f0;"></div>
<div style="position:absolute;left:114px;top:728.0px;width:30px;height:31px;border:2px solid #f4f4f4;background:#fff;border-radius:9px"></div>
<div style="position:absolute;left:120.5px;top:742.5px;width:17px;height:2px;background:#1f1f1f;"></div>
<div style="position:absolute;left:161.5px;top:716.0px;height:56px;line-height:56px;font-size:28px;color:#1f1f1f;white-space:nowrap;letter-spacing:-0.072px;"><i>系统管理</i></div>
<div style="position:absolute;left:498px;top:723.0px;width:80px;height:44px;border:2px solid #a3c8f6;background:#eaf2fe;border-radius:8px;color:#3a70e2;font-size:24px;line-height:39px;text-align:center;white-space:nowrap"><i>目录</i></div>
<div style="position:absolute;left:736.4px;top:716.0px;height:56px;line-height:56px;font-size:28px;color:#1f1f1f;white-space:nowrap;">3</div>
<div style="position:absolute;left:1752px;top:723.0px;width:80px;height:44px;border:2px solid #c3e6a2;background:#f7ffee;border-radius:8px;color:#5cb536;font-size:24px;line-height:39px;text-align:center;white-space:nowrap"><i>启用</i></div>
<div style="position:absolute;left:1968px;top:716.0px;height:56px;line-height:56px;font-size:28px;color:#1f1f1f;white-space:nowrap;letter-spacing:2.141px;">2026-04-08</div>
<div style="position:absolute;left:2140px;top:716.0px;height:56px;line-height:56px;font-size:28px;color:#1f1f1f;white-space:nowrap;letter-spacing:0.786px;">16:54:28</div>
<div style="position:absolute;left:2458px;top:716.0px;height:56px;line-height:56px;font-size:28px;color:#3a70e2;white-space:nowrap;letter-spacing:0.284px;"><i>新增</i></div>
<div style="position:absolute;left:2546px;top:716.0px;height:56px;line-height:56px;font-size:28px;color:#3a70e2;white-space:nowrap;letter-spacing:0.284px;"><i>编辑</i></div>
<div style="position:absolute;left:2634px;top:716.0px;height:56px;line-height:56px;font-size:28px;color:#3a70e2;white-space:nowrap;letter-spacing:0.284px;"><i>删除</i></div>
<div style="position:absolute;left:80px;top:799.5px;width:2690px;height:2px;background:#f0f0f0;"></div>
<div style="position:absolute;left:144px;top:842.0px;width:30px;height:31px;border:2px solid #f4f4f4;background:#fff;border-radius:9px"></div>
<div style="position:absolute;left:150.5px;top:856.5px;width:17px;height:2px;background:#1f1f1f;"></div>
<div style="position:absolute;left:191.5px;top:830.0px;height:56px;line-height:56px;font-size:28px;color:#1f1f1f;white-space:nowrap;letter-spacing:-0.072px;"><i>用户管理</i></div>
<div style="position:absolute;left:498px;top:837.0px;width:80px;height:44px;border:2px solid #c3e6a2;background:#f7ffee;border-radius:8px;color:#5cb536;font-size:24px;line-height:39px;text-align:center;white-space:nowrap"><i>菜单</i></div>
<div style="position:absolute;left:736.4px;top:830.0px;height:56px;line-height:56px;font-size:28px;color:#1f1f1f;white-space:nowrap;">1</div>
<div style="position:absolute;left:1188px;top:830.0px;height:56px;line-height:56px;font-size:28px;color:#1f1f1f;white-space:nowrap;letter-spacing:0.365px;">/system/user/index.vue</div>
<div style="position:absolute;left:1752px;top:837.0px;width:80px;height:44px;border:2px solid #c3e6a2;background:#f7ffee;border-radius:8px;color:#5cb536;font-size:24px;line-height:39px;text-align:center;white-space:nowrap"><i>启用</i></div>
<div style="position:absolute;left:1968px;top:830.0px;height:56px;line-height:56px;font-size:28px;color:#1f1f1f;white-space:nowrap;letter-spacing:2.141px;">2026-04-08</div>
<div style="position:absolute;left:2140px;top:830.0px;height:56px;line-height:56px;font-size:28px;color:#1f1f1f;white-space:nowrap;letter-spacing:0.786px;">16:54:28</div>
<div style="position:absolute;left:2458px;top:830.0px;height:56px;line-height:56px;font-size:28px;color:#3a70e2;white-space:nowrap;letter-spacing:0.284px;"><i>新增</i></div>
<div style="position:absolute;left:2546px;top:830.0px;height:56px;line-height:56px;font-size:28px;color:#3a70e2;white-space:nowrap;letter-spacing:0.284px;"><i>编辑</i></div>
<div style="position:absolute;left:2634px;top:830.0px;height:56px;line-height:56px;font-size:28px;color:#3a70e2;white-space:nowrap;letter-spacing:0.284px;"><i>删除</i></div>
<div style="position:absolute;left:80px;top:913.5px;width:2690px;height:2px;background:#f0f0f0;"></div>
<div style="position:absolute;left:221.5px;top:944.0px;height:56px;line-height:56px;font-size:28px;color:#1f1f1f;white-space:nowrap;letter-spacing:-0.072px;"><i>用户新增</i></div>
<div style="position:absolute;left:498px;top:951.0px;width:80px;height:44px;border:2px solid #f7e8aa;background:#fffdf0;border-radius:8px;color:#e6aa30;font-size:24px;line-height:39px;text-align:center;white-space:nowrap"><i>按钮</i></div>
<div style="position:absolute;left:736.4px;top:944.0px;height:56px;line-height:56px;font-size:28px;color:#1f1f1f;white-space:nowrap;">1</div>
<div style="position:absolute;left:898px;top:944.0px;height:56px;line-height:56px;font-size:28px;color:#1f1f1f;white-space:nowrap;letter-spacing:0.576px;">user:add</div>
<div style="position:absolute;left:1752px;top:951.0px;width:80px;height:44px;border:2px solid #c3e6a2;background:#f7ffee;border-radius:8px;color:#5cb536;font-size:24px;line-height:39px;text-align:center;white-space:nowrap"><i>启用</i></div>
<div style="position:absolute;left:1968px;top:944.0px;height:56px;line-height:56px;font-size:28px;color:#1f1f1f;white-space:nowrap;letter-spacing:2.141px;">2026-04-08</div>
<div style="position:absolute;left:2140px;top:944.0px;height:56px;line-height:56px;font-size:28px;color:#1f1f1f;white-space:nowrap;letter-spacing:0.786px;">16:54:29</div>
<div style="position:absolute;left:2458px;top:944.0px;height:56px;line-height:56px;font-size:28px;color:#3a70e2;white-space:nowrap;letter-spacing:0.284px;"><i>新增</i></div>
<div style="position:absolute;left:2546px;top:944.0px;height:56px;line-height:56px;font-size:28px;color:#3a70e2;white-space:nowrap;letter-spacing:0.284px;"><i>编辑</i></div>
<div style="position:absolute;left:2634px;top:944.0px;height:56px;line-height:56px;font-size:28px;color:#3a70e2;white-space:nowrap;letter-spacing:0.284px;"><i>删除</i></div>
<div style="position:absolute;left:80px;top:1027.5px;width:2690px;height:2px;background:#f0f0f0;"></div>
<div style="position:absolute;left:221.5px;top:1058.0px;height:56px;line-height:56px;font-size:28px;color:#1f1f1f;white-space:nowrap;letter-spacing:-0.072px;"><i>用户编辑</i></div>
<div style="position:absolute;left:498px;top:1065.0px;width:80px;height:44px;border:2px solid #f7e8aa;background:#fffdf0;border-radius:8px;color:#e6aa30;font-size:24px;line-height:39px;text-align:center;white-space:nowrap"><i>按钮</i></div>
<div style="position:absolute;left:736.4px;top:1058.0px;height:56px;line-height:56px;font-size:28px;color:#1f1f1f;white-space:nowrap;">2</div>
<div style="position:absolute;left:898px;top:1058.0px;height:56px;line-height:56px;font-size:28px;color:#1f1f1f;white-space:nowrap;letter-spacing:0.699px;">user:edit</div>
<div style="position:absolute;left:1752px;top:1065.0px;width:80px;height:44px;border:2px solid #c3e6a2;background:#f7ffee;border-radius:8px;color:#5cb536;font-size:24px;line-height:39px;text-align:center;white-space:nowrap"><i>启用</i></div>
<div style="position:absolute;left:1968px;top:1058.0px;height:56px;line-height:56px;font-size:28px;color:#1f1f1f;white-space:nowrap;letter-spacing:2.141px;">2026-04-08</div>
<div style="position:absolute;left:2140px;top:1058.0px;height:56px;line-height:56px;font-size:28px;color:#1f1f1f;white-space:nowrap;letter-spacing:0.786px;">16:54:29</div>
<div style="position:absolute;left:2458px;top:1058.0px;height:56px;line-height:56px;font-size:28px;color:#3a70e2;white-space:nowrap;letter-spacing:0.284px;"><i>新增</i></div>
<div style="position:absolute;left:2546px;top:1058.0px;height:56px;line-height:56px;font-size:28px;color:#3a70e2;white-space:nowrap;letter-spacing:0.284px;"><i>编辑</i></div>
<div style="position:absolute;left:2634px;top:1058.0px;height:56px;line-height:56px;font-size:28px;color:#3a70e2;white-space:nowrap;letter-spacing:0.284px;"><i>删除</i></div>
<div style="position:absolute;left:80px;top:1141.5px;width:2690px;height:2px;background:#f0f0f0;"></div>
<div style="position:absolute;left:221.5px;top:1172.0px;height:56px;line-height:56px;font-size:28px;color:#1f1f1f;white-space:nowrap;letter-spacing:-0.072px;"><i>用户删除</i></div>
<div style="position:absolute;left:498px;top:1179.0px;width:80px;height:44px;border:2px solid #f7e8aa;background:#fffdf0;border-radius:8px;color:#e6aa30;font-size:24px;line-height:39px;text-align:center;white-space:nowrap"><i>按钮</i></div>
<div style="position:absolute;left:736.4px;top:1172.0px;height:56px;line-height:56px;font-size:28px;color:#1f1f1f;white-space:nowrap;">3</div>
<div style="position:absolute;left:898px;top:1172.0px;height:56px;line-height:56px;font-size:28px;color:#1f1f1f;white-space:nowrap;letter-spacing:0.645px;">user:delete</div>
<div style="position:absolute;left:1752px;top:1179.0px;width:80px;height:44px;border:2px solid #c3e6a2;background:#f7ffee;border-radius:8px;color:#5cb536;font-size:24px;line-height:39px;text-align:center;white-space:nowrap"><i>启用</i></div>
<div style="position:absolute;left:1968px;top:1172.0px;height:56px;line-height:56px;font-size:28px;color:#1f1f1f;white-space:nowrap;letter-spacing:2.141px;">2026-04-08</div>
<div style="position:absolute;left:2140px;top:1172.0px;height:56px;line-height:56px;font-size:28px;color:#1f1f1f;white-space:nowrap;letter-spacing:0.786px;">16:54:29</div>
<div style="position:absolute;left:2458px;top:1172.0px;height:56px;line-height:56px;font-size:28px;color:#3a70e2;white-space:nowrap;letter-spacing:0.284px;"><i>新增</i></div>
<div style="position:absolute;left:2546px;top:1172.0px;height:56px;line-height:56px;font-size:28px;color:#3a70e2;white-space:nowrap;letter-spacing:0.284px;"><i>编辑</i></div>
<div style="position:absolute;left:2634px;top:1172.0px;height:56px;line-height:56px;font-size:28px;color:#3a70e2;white-space:nowrap;letter-spacing:0.284px;"><i>删除</i></div>
<div style="position:absolute;left:80px;top:1255.5px;width:2690px;height:2px;background:#f0f0f0;"></div>
<div style="position:absolute;left:221.5px;top:1286.0px;height:56px;line-height:56px;font-size:28px;color:#1f1f1f;white-space:nowrap;letter-spacing:-0.072px;"><i>用户查询</i></div>
<div style="position:absolute;left:498px;top:1293.0px;width:80px;height:44px;border:2px solid #f7e8aa;background:#fffdf0;border-radius:8px;color:#e6aa30;font-size:24px;line-height:39px;text-align:center;white-space:nowrap"><i>按钮</i></div>
<div style="position:absolute;left:736.4px;top:1286.0px;height:56px;line-height:56px;font-size:28px;color:#1f1f1f;white-space:nowrap;">4</div>
<div style="position:absolute;left:898px;top:1286.0px;height:56px;line-height:56px;font-size:28px;color:#1f1f1f;white-space:nowrap;letter-spacing:0.470px;">user:search</div>
<div style="position:absolute;left:1752px;top:1293.0px;width:80px;height:44px;border:2px solid #c3e6a2;background:#f7ffee;border-radius:8px;color:#5cb536;font-size:24px;line-height:39px;text-align:center;white-space:nowrap"><i>启用</i></div>
<div style="position:absolute;left:1968px;top:1286.0px;height:56px;line-height:56px;font-size:28px;color:#1f1f1f;white-space:nowrap;letter-spacing:2.141px;">2026-04-08</div>
<div style="position:absolute;left:2140px;top:1286.0px;height:56px;line-height:56px;font-size:28px;color:#1f1f1f;white-space:nowrap;letter-spacing:0.786px;">16:54:29</div>
<div style="position:absolute;left:2458px;top:1286.0px;height:56px;line-height:56px;font-size:28px;color:#3a70e2;white-space:nowrap;letter-spacing:0.284px;"><i>新增</i></div>
<div style="position:absolute;left:2546px;top:1286.0px;height:56px;line-height:56px;font-size:28px;color:#3a70e2;white-space:nowrap;letter-spacing:0.284px;"><i>编辑</i></div>
<div style="position:absolute;left:2634px;top:1286.0px;height:56px;line-height:56px;font-size:28px;color:#3a70e2;white-space:nowrap;letter-spacing:0.284px;"><i>删除</i></div>
<div style="position:absolute;left:80px;top:1369.5px;width:2690px;height:2px;background:#f0f0f0;"></div>
<div style="position:absolute;left:144px;top:1412.0px;width:30px;height:31px;border:2px solid #f4f4f4;background:#fff;border-radius:9px"></div>
<div style="position:absolute;left:150.5px;top:1426.5px;width:17px;height:2px;background:#1f1f1f;"></div>
<div style="position:absolute;left:158px;top:1419.0px;width:2px;height:17px;background:#1f1f1f;"></div>
<div style="position:absolute;left:191.5px;top:1400.0px;height:56px;line-height:56px;font-size:28px;color:#1f1f1f;white-space:nowrap;letter-spacing:-0.072px;"><i>角色管理</i></div>
<div style="position:absolute;left:498px;top:1407.0px;width:80px;height:44px;border:2px solid #c3e6a2;background:#f7ffee;border-radius:8px;color:#5cb536;font-size:24px;line-height:39px;text-align:center;white-space:nowrap"><i>菜单</i></div>
<div style="position:absolute;left:736.4px;top:1400.0px;height:56px;line-height:56px;font-size:28px;color:#1f1f1f;white-space:nowrap;">2</div>
<div style="position:absolute;left:1188px;top:1400.0px;height:56px;line-height:56px;font-size:28px;color:#1f1f1f;white-space:nowrap;letter-spacing:0.401px;">/system/role/index.vue</div>
<div style="position:absolute;left:1752px;top:1407.0px;width:80px;height:44px;border:2px solid #c3e6a2;background:#f7ffee;border-radius:8px;color:#5cb536;font-size:24px;line-height:39px;text-align:center;white-space:nowrap"><i>启用</i></div>
<div style="position:absolute;left:1968px;top:1400.0px;height:56px;line-height:56px;font-size:28px;color:#1f1f1f;white-space:nowrap;letter-spacing:2.141px;">2026-04-08</div>
<div style="position:absolute;left:2140px;top:1400.0px;height:56px;line-height:56px;font-size:28px;color:#1f1f1f;white-space:nowrap;letter-spacing:0.786px;">16:54:28</div>
<div style="position:absolute;left:2458px;top:1400.0px;height:56px;line-height:56px;font-size:28px;color:#3a70e2;white-space:nowrap;letter-spacing:0.284px;"><i>新增</i></div>
<div style="position:absolute;left:2546px;top:1400.0px;height:56px;line-height:56px;font-size:28px;color:#3a70e2;white-space:nowrap;letter-spacing:0.284px;"><i>编辑</i></div>
<div style="position:absolute;left:2634px;top:1400.0px;height:56px;line-height:56px;font-size:28px;color:#3a70e2;white-space:nowrap;letter-spacing:0.284px;"><i>删除</i></div>
<div style="position:absolute;left:80px;top:1483.5px;width:2690px;height:2px;background:#f0f0f0;"></div>
<div style="position:absolute;left:144px;top:1526.0px;width:30px;height:31px;border:2px solid #f4f4f4;background:#fff;border-radius:9px"></div>
<div style="position:absolute;left:150.5px;top:1540.5px;width:17px;height:2px;background:#1f1f1f;"></div>
<div style="position:absolute;left:158px;top:1533.0px;width:2px;height:17px;background:#1f1f1f;"></div>
<div style="position:absolute;left:191.5px;top:1514.0px;height:56px;line-height:56px;font-size:28px;color:#1f1f1f;white-space:nowrap;letter-spacing:-0.072px;"><i>菜单管理</i></div>
<div style="position:absolute;left:498px;top:1521.0px;width:80px;height:44px;border:2px solid #c3e6a2;background:#f7ffee;border-radius:8px;color:#5cb536;font-size:24px;line-height:39px;text-align:center;white-space:nowrap"><i>菜单</i></div>
<div style="position:absolute;left:736.4px;top:1514.0px;height:56px;line-height:56px;font-size:28px;color:#1f1f1f;white-space:nowrap;">3</div>
<div style="position:absolute;left:1188px;top:1514.0px;height:56px;line-height:56px;font-size:28px;color:#1f1f1f;white-space:nowrap;letter-spacing:0.385px;">/system/menu/index.vue</div>
<div style="position:absolute;left:1752px;top:1521.0px;width:80px;height:44px;border:2px solid #c3e6a2;background:#f7ffee;border-radius:8px;color:#5cb536;font-size:24px;line-height:39px;text-align:center;white-space:nowrap"><i>启用</i></div>
<div style="position:absolute;left:1968px;top:1514.0px;height:56px;line-height:56px;font-size:28px;color:#1f1f1f;white-space:nowrap;letter-spacing:2.141px;">2026-04-08</div>
<div style="position:absolute;left:2140px;top:1514.0px;height:56px;line-height:56px;font-size:28px;color:#1f1f1f;white-space:nowrap;letter-spacing:0.786px;">16:54:28</div>
<div style="position:absolute;left:2458px;top:1514.0px;height:56px;line-height:56px;font-size:28px;color:#3a70e2;white-space:nowrap;letter-spacing:0.284px;"><i>新增</i></div>
<div style="position:absolute;left:2546px;top:1514.0px;height:56px;line-height:56px;font-size:28px;color:#3a70e2;white-space:nowrap;letter-spacing:0.284px;"><i>编辑</i></div>
<div style="position:absolute;left:2634px;top:1514.0px;height:56px;line-height:56px;font-size:28px;color:#3a70e2;white-space:nowrap;letter-spacing:0.284px;"><i>删除</i></div>
<div style="position:absolute;left:80px;top:1597.5px;width:2690px;height:2px;background:#f0f0f0;"></div>
<div style="position:absolute;left:2850px;top:418px;width:30px;height:1214px;background:#fcfcfc;border-left:2px solid #ececec"></div>
<div style="position:absolute;left:2858px;top:776px;width:16px;height:614px;background:#c1c1c1;border-radius:8px"></div>
<div style="position:absolute;left:180px;top:1566px;width:2510px;height:66px;background:linear-gradient(to bottom,rgba(0,0,0,0),rgba(0,0,0,0.038) 45%,rgba(0,0,0,0.135));-webkit-mask-image:linear-gradient(to right,transparent,#000 140px,#000 2380px,transparent);mask-image:linear-gradient(to right,transparent,#000 140px,#000 2380px,transparent)"></div>
<div class="nb" style="position:absolute;left:2604px;top:1550px;height:52px;line-height:52px;font-size:26px;color:#fdfdfd;white-space:nowrap;letter-spacing:-1.013px;font-weight:500;text-shadow:1.6px 1.6px 1px rgba(0,0,0,.62),0 0 1.5px rgba(0,0,0,.35);"><i>掘金技术社区</i> <span style="font-size:.88em">@</span> <i>三原</i></div>
</div>
<svg style="position:absolute;left:0;top:1592px" width="2880" height="40" viewBox="0 0 2880 40"><path d="M0 20 V40 H20 A20 20 0 0 1 0 20 Z M2880 20 V40 H2860 A20 20 0 0 0 2880 20 Z" fill="#05050f"/></svg>
</body></html>
